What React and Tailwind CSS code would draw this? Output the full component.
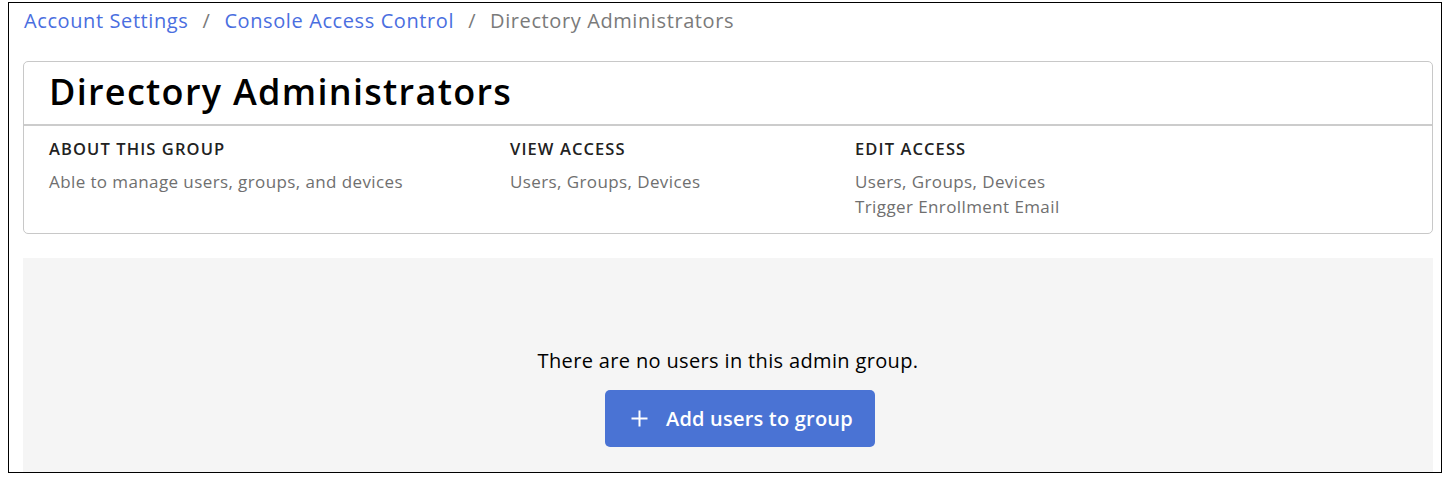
export default function App() {
  const font = { fontFamily: "'Open Sans', sans-serif" };
  return (
    <div className="bg-white w-[1448px] h-[489px]" style={font}>
      <div className="ml-[8px] mt-[2px] w-[1434px] h-[471px] border border-black overflow-hidden pl-[14px] pr-[8px]">
        <nav className="flex items-center h-[35px] text-[20px] tracking-[0.6px] text-[#7a7a7a]">
          <a className="text-[#4a6ee0] ml-[1px]">Account Settings</a>
          <span className="mx-[14px]">/</span>
          <a className="text-[#4a6ee0]">Console Access Control</a>
          <span className="mx-[14px]">/</span>
          <span>Directory Administrators</span>
        </nav>
        <div className="mt-[23px] border border-[#c8c8c8] rounded-[5px]">
          <div className="h-[64px] flex items-center px-[25px] border-b-2 border-[#cccccc]">
            <h1 className="text-[36px] font-semibold text-black tracking-[1.3px] -mt-[3px]">Directory Administrators</h1>
          </div>
          <div className="flex px-[25px] pt-[11px] pb-[14px]">
            <div className="w-[461px]">
              <div className="text-[16.5px] font-semibold text-[#222] tracking-[1.1px] leading-[24px]">ABOUT THIS GROUP</div>
              <div className="mt-[8px] text-[17px] tracking-[0.4px] text-[#6f6f6f] leading-[25px]">Able to manage users, groups, and devices</div>
            </div>
            <div className="w-[345px]">
              <div className="text-[16.5px] font-semibold text-[#222] tracking-[1.1px] leading-[24px]">VIEW ACCESS</div>
              <div className="mt-[8px] text-[17px] tracking-[0.4px] text-[#6f6f6f] leading-[25px]">Users, Groups, Devices</div>
            </div>
            <div>
              <div className="text-[16.5px] font-semibold text-[#222] tracking-[1.1px] leading-[24px]">EDIT ACCESS</div>
              <div className="mt-[8px] text-[17px] tracking-[0.4px] text-[#6f6f6f] leading-[25px]">
                <div>Users, Groups, Devices</div>
                <div>Trigger Enrollment Email</div>
              </div>
            </div>
          </div>
        </div>
        <div className="mt-[24px] bg-[#f5f5f5] h-[260px] flex flex-col items-center pt-[89px]">
          <p className="text-[20px] tracking-[0.35px] text-black leading-[28px]">There are no users in this admin group.</p>
          <button className="mt-[15px] ml-[24px] w-[270px] h-[57px] rounded-[5px] bg-[#4a73d4] text-white text-[20px] tracking-[0.2px] font-semibold flex items-center pl-[26px] gap-[18px]">
            <svg width="17" height="17" viewBox="0 0 17 17" className="shrink-0">
              <path d="M8.5 0.5v16M0.5 8.5h16" stroke="white" strokeWidth="2" />
            </svg>
            <span>Add users to group</span>
          </button>
        </div>
      </div>
    </div>
  );
}
